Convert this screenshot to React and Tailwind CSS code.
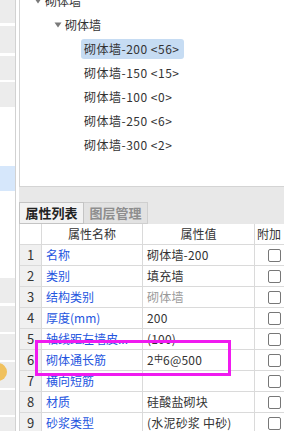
import React from "react";

const FONT = { fontFamily: '"Noto Sans CJK SC", "Noto Sans", sans-serif' };

const strip = [
  { h: 23, c: "bg-[#ececec]" },
  { h: 3, c: "bg-white" },
  { h: 27, c: "bg-[#ececec]" },
  { h: 3, c: "bg-white" },
  { h: 24, c: "bg-[#ececec]" },
  { h: 2, c: "bg-white" },
  { h: 25, c: "bg-[#ececec]" },
  { h: 59, c: "bg-white" },
  { h: 25, c: "bg-[#d6e7fb]" },
  { h: 87, c: "bg-white" },
  { h: 25, c: "bg-[#ececec]" },
  { h: 3, c: "bg-white" },
  { h: 26, c: "bg-[#ececec]" },
  { h: 2, c: "bg-white" },
  { h: 26, c: "bg-[#ececec]" },
  { h: 2, c: "bg-white" },
  { h: 26, c: "bg-[#ececec]", dot: true },
  { h: 2, c: "bg-white" },
  { h: 25, c: "bg-[#ececec]" },
  { h: 2, c: "bg-white" },
  { h: 20, c: "bg-[#ececec]" },
];

const items = [
  ["砌体墙-200 <56>", true],
  ["砌体墙-150 <15>", false],
  ["砌体墙-100 <0>", false],
  ["砌体墙-250 <6>", false],
  ["砌体墙-300 <2>", false],
];

const rows = [
  ["1", "名称", "砌体墙-200", "text-[#333]"],
  ["2", "类别", "填充墙", "text-[#333]"],
  ["3", "结构类别", "砌体墙", "text-[#9a9a9a]"],
  ["4", "厚度(mm)", "200", "text-[#333]"],
  ["5", "轴线距左墙皮...", "(100)", "text-[#333]", true],
  ["6", "砌体通长筋", "rebar", "text-[#333]"],
  ["7", "横向短筋", "", "text-[#333]"],
  ["8", "材质", "硅酸盐砌块", "text-[#333]"],
  ["9", "砂浆类型", "(水泥砂浆 中砂)", "text-[#333]"],
];

function Tri() {
  return (
    <svg width="8" height="6" viewBox="0 0 8 6" className="shrink-0">
      <path d="M0.5 0.5 L7.5 0.5 L4 5.5 Z" fill="#7a7a7a" />
    </svg>
  );
}

function Check() {
  return <div className="w-[13px] h-[13px] border border-[#777] rounded-[2px] bg-white" />;
}

export default function App() {
  return (
    <div
      className="relative w-[284px] h-[431px] overflow-hidden bg-white flex text-[12px] text-[#333]"
      style={FONT}
    >
      {/* left strip */}
      <div className="w-[16px] shrink-0 border-r border-[#d2d2d2] flex flex-col overflow-hidden">
        {strip.map((b, i) => (
          <div
            key={i}
            className={`relative w-[15px] shrink-0 ${b.c}`}
            style={{ height: b.h }}
          >
            {b.dot && (
              <div className="absolute left-[-11px] top-[1px] w-[18px] h-[18px] rounded-full bg-[#f0c15e]" />
            )}
          </div>
        ))}
      </div>

      {/* main */}
      <div className="ml-[3px] flex-1 flex flex-col min-w-0">
        {/* tree panel */}
        <div className="h-[187px] shrink-0 border-l border-b border-[#d4d4d4] overflow-hidden bg-white">
          <div className="mt-[-11px] flex flex-col">
            <div className="h-[24px] flex items-center pl-[14px] gap-[3px]">
              <Tri />
              <span>砌体墙</span>
            </div>
            <div className="h-[24px] flex items-center pl-[34px] gap-[3px]">
              <Tri />
              <span>砌体墙</span>
            </div>
            {items.map(([t, sel]) => (
              <div key={t} className="h-[24px] flex items-center pl-[61px]">
                <span
                  className={`h-[20px] flex items-center px-[3px] rounded-[3px] whitespace-nowrap tracking-[0.5px] ${
                    sel ? "bg-[#c6dcf3] pr-[5px]" : ""
                  }`}
                >
                  {t}
                </span>
              </div>
            ))}
          </div>
        </div>

        <div className="h-[15px] shrink-0 bg-[#e8e8e8]" />

        {/* tabs */}
        <div className="h-[22px] shrink-0 flex bg-[#e8e8e8] text-[13px] font-bold">
          <div className="w-[65px] flex items-center justify-center bg-[#f2f2f2] border border-[#c4c4c4] text-[#222]">
            属性列表
          </div>
          <div className="w-[64px] flex items-center justify-center bg-[#e2e2e2] border-y border-r border-[#cfcfcf] text-[#8e8e8e]">
            图层管理
          </div>
        </div>

        {/* table */}
        <div className="flex flex-col border-l border-[#d4d4d4]">
          <div className="grid grid-cols-[22px_101px_112px_1fr] h-[21px] shrink-0">
            <div className="border-r border-b border-[#dadada] bg-white" />
            <div className="border-r border-b border-[#dadada] flex items-center justify-center">
              属性名称
            </div>
            <div className="border-r border-b border-[#dadada] flex items-center justify-center">
              属性值
            </div>
            <div className="border-b border-[#dadada] flex items-center pl-[2px] whitespace-nowrap">
              附加
            </div>
          </div>
          {rows.map(([n, name, val, vc]) => (
            <div
              key={n}
              className="grid grid-cols-[22px_101px_112px_1fr] h-[21px] shrink-0"
            >
              <div className="border-r border-b border-[#dadada] bg-[#f0f0f0] flex items-center justify-center text-[13px]">
                {n}
              </div>
              <div className="border-r border-b border-[#dadada] flex items-center pl-[4px] text-[#2455e0] whitespace-nowrap overflow-hidden">
                {name}
              </div>
              <div
                className={`border-r border-b border-[#dadada] flex items-center pl-[4px] whitespace-nowrap overflow-hidden tracking-[0.2px] ${vc}`}
              >
                {val === "rebar" ? (
                  <span>
                    2<span className="text-[9px] relative top-[-3px]">中</span>6@500
                  </span>
                ) : (
                  val
                )}
              </div>
              <div className="border-b border-[#dadada] flex items-center pl-[13px]">
                <Check />
              </div>
            </div>
          ))}
        </div>
      </div>

      {/* magenta highlight box */}
      <div className="absolute left-[35px] top-[340px] w-[196px] h-[36px] border-[3px] border-[#f01af0]" />
    </div>
  );
}
